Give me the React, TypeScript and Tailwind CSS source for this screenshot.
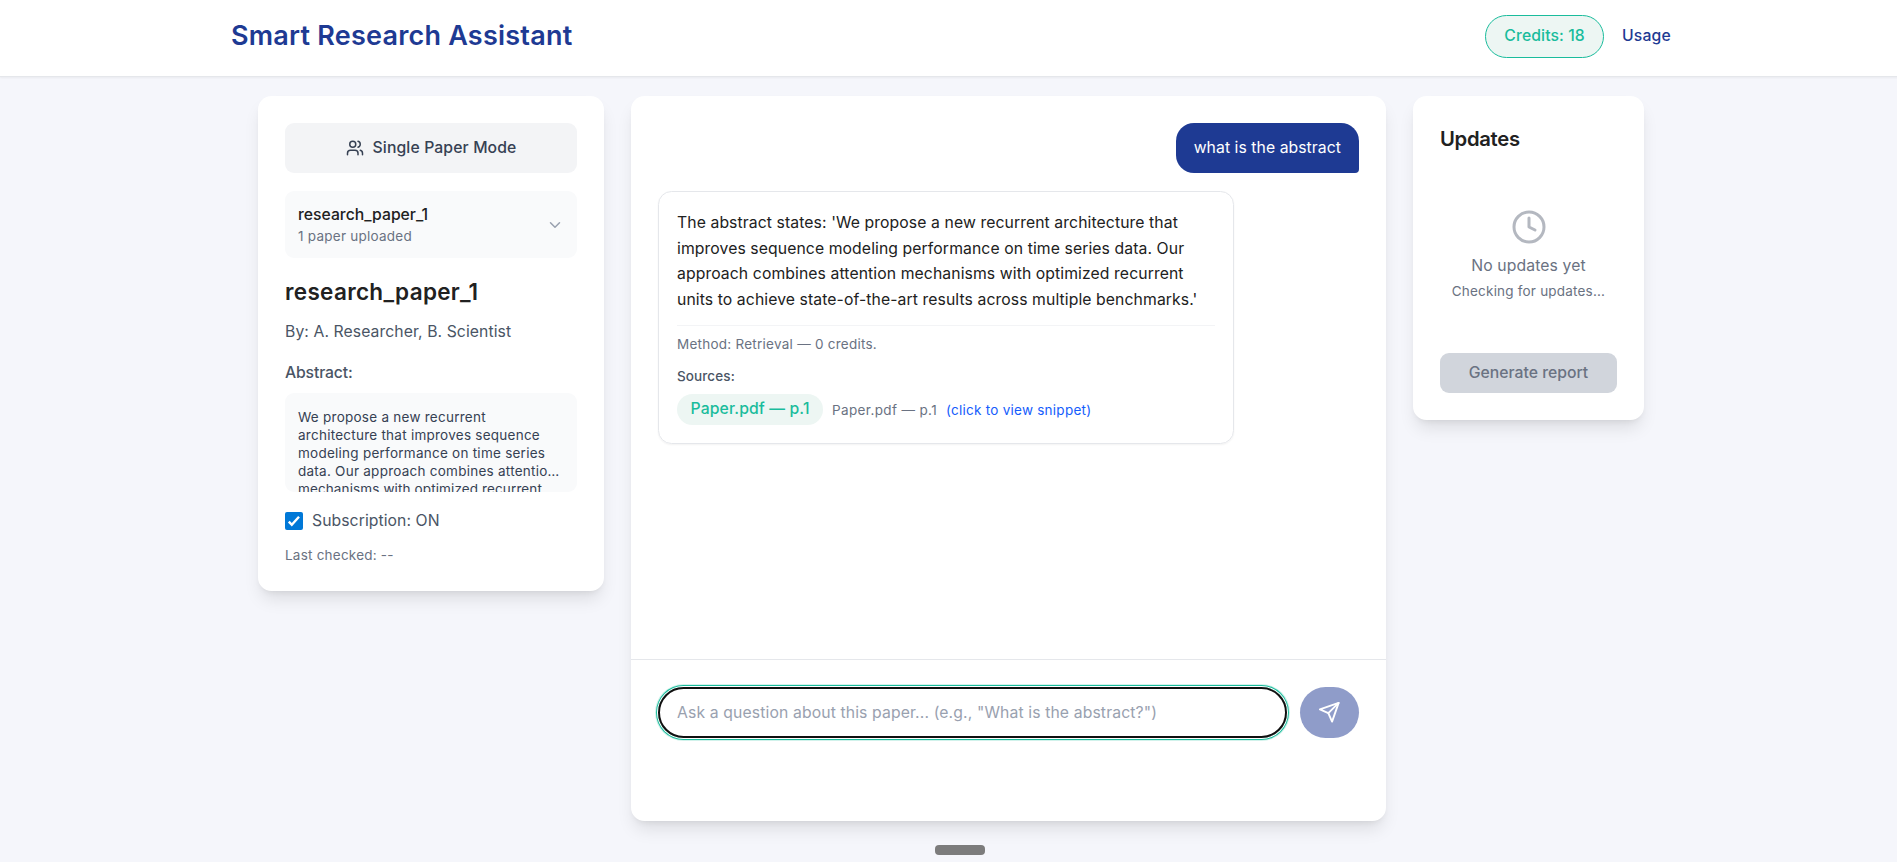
import { ChevronDown, Clock, Users } from "lucide-react";

const cardClass =
  "rounded-[13.5px] bg-white shadow-[0_11px_17px_-3px_rgba(0,0,0,0.1),0_4px_7px_-4px_rgba(0,0,0,0.1)]";

function Header() {
  return (
    <header className="h-[77px] border-b border-gray-200 bg-white shadow-[0_1px_2px_rgba(0,0,0,0.05)]">
      <div className="mx-auto flex h-[72px] w-[1440px] items-center justify-between">
        <h1 className="text-[27px] leading-9 font-semibold tracking-[0.22px] text-[#1e3a93]">Smart Research Assistant</h1>
        <div className="flex items-center gap-[18px]">
          <span className="flex h-[43px] items-center rounded-full border border-[#1abc9c] bg-[#edf6f3] px-[18px] text-[15.75px] font-medium tracking-[0.1px] text-[#1abc9c]">
            Credits: 18
          </span>
          <a className="text-[15.75px] font-medium tracking-[0.2px] text-[#1e3a93]">Usage</a>
        </div>
      </div>
    </header>
  );
}

function PaperPanel() {
  return (
    <aside className={`${cardClass} h-[495px] w-[346px] shrink-0 p-[27px]`}>
      <button className="flex h-[50px] w-full items-center justify-center gap-[9px] rounded-[9px] bg-gray-100 text-[15.75px] font-medium tracking-[0.12px] text-gray-700">
        <Users size={18} />
        Single Paper Mode
      </button>
      <div className="mt-[18px] flex h-[67px] items-center justify-between rounded-[9px] bg-gray-50 px-[13px]">
        <div>
          <div className="relative top-px text-[15.75px] leading-[22.5px] font-medium text-[#212121]">research_paper_1</div>
          <div className="text-[13.5px] leading-[20px] tracking-[0.25px] text-gray-500">1 paper uploaded</div>
        </div>
        <ChevronDown size={18} className="text-gray-400" />
      </div>
      <h2 className="mt-[18px] text-[22.5px] leading-[31.5px] font-semibold tracking-[0.32px] text-[#212121]">
        research_paper_1
      </h2>
      <p className="mt-[13px] text-[15.75px] leading-[22.5px] tracking-[0.08px] text-gray-600">
        By: A. Researcher, B. Scientist
      </p>
      <p className="mt-[18.5px] text-[15.75px] leading-[22.5px] font-medium tracking-[-0.15px] text-gray-600">Abstract:</p>
      <div className="mt-[8.5px] h-[99px] overflow-hidden rounded-[9px] bg-gray-50 px-[13px] pt-[15px] text-[13.5px] leading-[18px] tracking-[0.25px] whitespace-nowrap text-gray-700">
        We propose a new recurrent
        <br />
        architecture that improves sequence
        <br />
        modeling performance on time series
        <br />
        data. Our approach combines attentio…
        <br />
        <span className="tracking-[0.12px]">mechanisms with optimized recurrent</span>
      </div>
      <label className="mt-[18px] flex items-center gap-[9px] text-[15.75px] leading-[22.5px] tracking-[0.06px] text-gray-600">
        <svg viewBox="0 0 18 18" className="size-[18px]">
          <rect width="18" height="18" rx="2" fill="#0078d7" />
          <path d="M3.8 9.6l3 3.2 7.2-8" fill="none" stroke="white" strokeWidth="2.4" />
        </svg>
        Subscription: ON
      </label>
      <p className="mt-[13px] text-[13.5px] leading-[20px] tracking-[0.22px] text-gray-500">Last checked: --</p>
    </aside>
  );
}

function SendIcon() {
  return (
    <svg
      viewBox="0 0 24 24"
      className="size-[22.5px]"
      fill="none"
      stroke="currentColor"
      strokeWidth="2"
      strokeLinecap="round"
      strokeLinejoin="round"
    >
      <path d="m22 2-7 20-4-9-9-4Z" />
      <path d="M22 2 11 13" />
    </svg>
  );
}

function ChatPanel() {
  return (
    <section className={`${cardClass} flex h-[725px] w-[755px] shrink-0 flex-col`}>
      <div className="flex h-[563px] flex-col gap-[18px] p-[27px]">
        <div className="flex h-[50px] items-center self-end rounded-[18px] rounded-br-[4px] bg-[#1e3a93] px-[18px] text-[15.75px] tracking-[0.06px] text-white">
          what is the abstract
        </div>
        <div className="h-[253px] w-[576px] rounded-[13.5px] border border-gray-200 px-[18px] pt-[18px] text-[15.75px] shadow-[0_1px_2px_rgba(0,0,0,0.05)]">
          <p className="leading-[25.5px] tracking-[0.09px] whitespace-nowrap text-[#212121]">
            The abstract states: 'We propose a new recurrent architecture that
            <br />
            improves sequence modeling performance on time series data. Our
            <br />
            approach combines attention mechanisms with optimized recurrent
            <br />
            units to achieve state-of-the-art results across multiple benchmarks.'
          </p>
          <div className="mt-[13px] border-t border-gray-100 pt-[8px] text-[13.5px] leading-[20px]">
            <p className="tracking-[0.25px] text-gray-500">Method: Retrieval — 0 credits.</p>
            <p className="mt-[12px] font-medium tracking-[0.1px] text-gray-600">Sources:</p>
            <div className="mt-[8px] flex items-center gap-[9px] text-gray-500">
              <span className="flex h-[31px] items-center rounded-full bg-[#edf6f3] px-[13.5px] pb-[2px] text-[15.75px] font-medium tracking-[0.13px] text-[#1abc9c]">
                Paper.pdf — p.1
              </span>
              <span className="tracking-[0.36px]">Paper.pdf — p.1</span>
              <a className="tracking-[0.25px] text-blue-600">(click to view snippet)</a>
            </div>
          </div>
        </div>
      </div>
      <div className="flex gap-[13.5px] border-t border-gray-200 px-[27px] pt-[27px]">
        <div className="flex h-[51px] w-[629px] items-center rounded-[27px] border-2 border-[#101010] px-[17px] text-[15.75px] tracking-[0.12px] text-gray-400 shadow-[0_0_0_1px_white,0_0_0_2px_#1abc9c,0_0_0_3px_rgba(26,188,156,0.2)]">
          Ask a question about this paper... (e.g., "What is the abstract?")
        </div>
        <button className="flex h-[51px] w-[59px] items-center justify-center rounded-[27px] bg-[#8f9cc9] text-white">
          <SendIcon />
        </button>
      </div>
    </section>
  );
}

function UpdatesPanel() {
  return (
    <aside className={`${cardClass} h-[324px] w-[231px] shrink-0 p-[27px]`}>
      <h2 className="text-[20.25px] leading-[31.5px] font-semibold tracking-[-0.3px] text-[#212121]">Updates</h2>
      <div className="mt-[54px] flex flex-col items-center text-gray-500">
        <Clock size={36} className="text-[#b4b8c0]" />
        <p className="mt-[8px] text-[15.75px] leading-[25px] tracking-[0.12px]">No updates yet</p>
        <p className="mt-[3px] text-[13.5px] leading-[20px] tracking-[0.2px]">Checking for updates...</p>
      </div>
      <button className="mt-[52.5px] h-[40px] w-full rounded-[9px] bg-gray-300 text-[15.75px] font-medium text-gray-500">
        Generate report
      </button>
    </aside>
  );
}

export default function App() {
  return (
    <div className="h-[862px] w-full overflow-hidden bg-[#f5f6fb] font-['Inter',sans-serif]">
      <div className="w-[1902px]">
        <Header />
        <main className="flex items-start gap-[27px] pt-[19px] pl-[258px]">
          <PaperPanel />
          <ChatPanel />
          <UpdatesPanel />
        </main>
        <div className="mt-[24px] ml-[935px] h-[10px] w-[50px] rounded-[4px] bg-[#7c7c7c]" />
      </div>
    </div>
  );
}
